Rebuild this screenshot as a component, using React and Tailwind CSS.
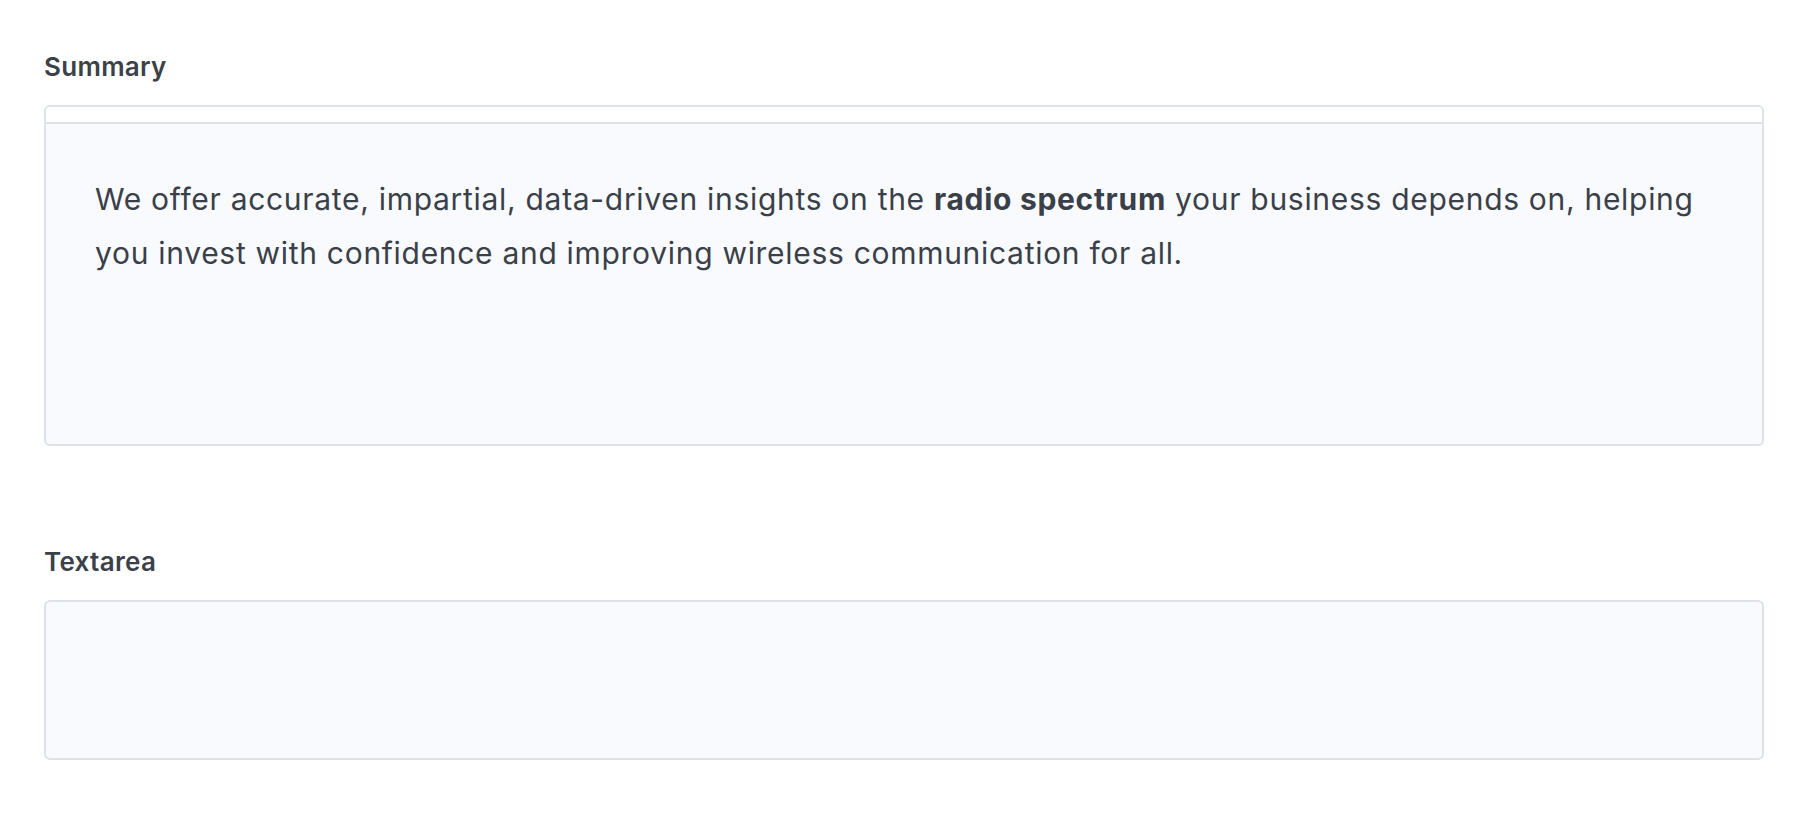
import React from "react";

export default function App() {
    return (
        <div className="min-h-screen bg-white px-[44px] pt-[49px] font-['Inter',sans-serif] text-[#374151]">
            {/* Summary (rich text editor) */}
            <div>
                <label className="block text-[26px] leading-[36px] font-semibold tracking-[0.3px] text-[#3b4149] mb-[20px]">
                    Summary
                </label>
                <div className="rounded-[6px] border-2 border-[#dde2ea] overflow-hidden">
                    <div className="h-[17px] bg-white border-b-2 border-[#dde2ea]" />
                    <div className="min-h-[320px] bg-[#f9fafd] px-[49px] pt-[48px] pb-[20px] text-[30px] leading-[54px] tracking-[0.7px] text-[#394049]">
                        <p>
                            We offer accurate, impartial, data-driven insights on the{" "}
                            <strong className="font-bold">radio spectrum</strong> your business
                            depends on, helping you invest with confidence and improving wireless
                            communication for all.
                        </p>
                    </div>
                </div>
            </div>

            {/* Textarea */}
            <div className="mt-[98px]">
                <label className="block text-[26px] leading-[36px] font-semibold tracking-[0.3px] text-[#3b4149] mb-[20px]">
                    Textarea
                </label>
                <textarea className="block w-full h-[160px] resize-none rounded-[6px] border-2 border-[#dde2ea] bg-[#f9fafd] outline-none" />
            </div>
        </div>
    );
}
